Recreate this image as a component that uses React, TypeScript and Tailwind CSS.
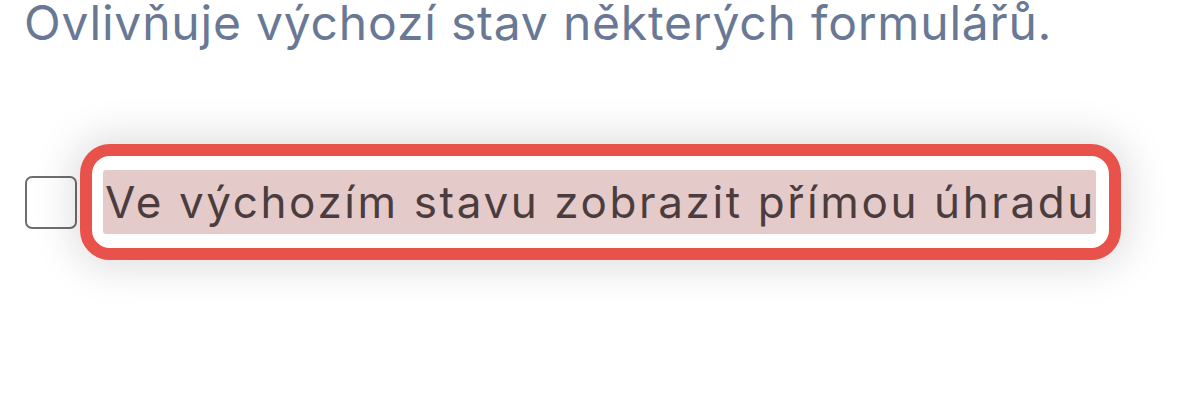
import React from 'react'

const font = { fontFamily: 'Inter, "Noto Sans", sans-serif' }

export default function App() {
  return (
    <div className="min-h-[401px] w-[1200px] overflow-hidden bg-white pl-[24px]" style={font}>
      <p className="-mt-[1px] text-[48px] leading-[48px] tracking-[0.8px] text-[#697895] whitespace-nowrap">
        Ovlivňuje výchozí stav některých formulářů.
      </p>

      <div className="mt-[97px] flex items-center">
        <span className="ml-[1px] block h-[53px] w-[52px] shrink-0 rounded-[7px] border-2 border-[#6e6e6e] bg-white" />
        <label className="ml-[3px] block rounded-[30px] border-[12px] border-[#e8524a] bg-white py-[14px] pl-[11px] pr-[13px] shadow-[0_0_40px_8px_rgba(0,0,0,0.13)]">
          <span className="block whitespace-nowrap rounded-[3px] bg-[#e4cbca] pl-[2px] pr-0 text-[44px] leading-[64px] tracking-[2.6px] text-[#4b3d3d]">
            Ve výchozím stavu zobrazit přímou úhradu
          </span>
        </label>
      </div>
    </div>
  )
}
